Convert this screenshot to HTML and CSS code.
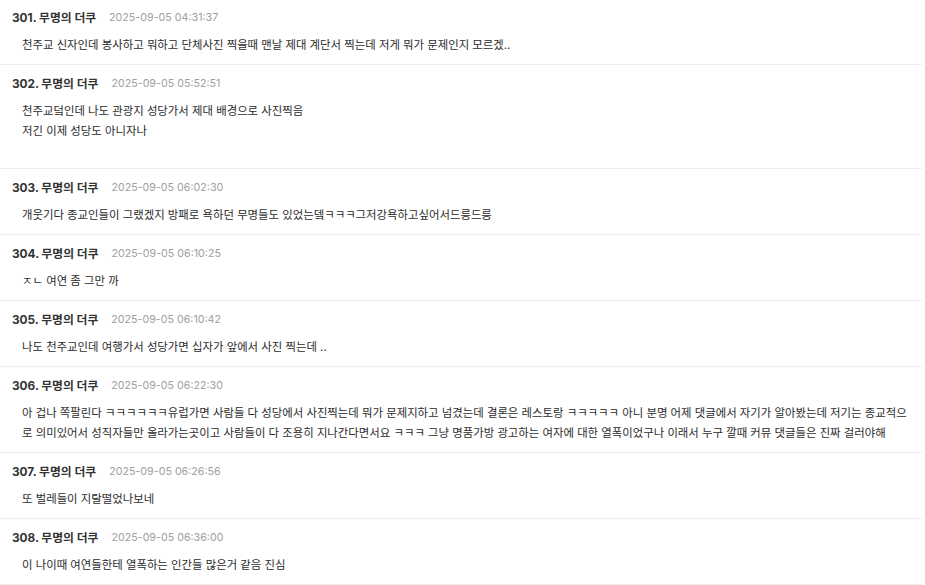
FILE: index.html
```html
<!DOCTYPE html>
<html lang="ko">
<head>
<meta charset="utf-8">
<title>댓글</title>
<link rel="stylesheet" href="styles.css">
</head>
<body>
<ul class="comments">
  <li class="comment">
    <div class="head"><span class="author">301. 무명의 더쿠</span><span class="date">2025-09-05 04:31:37</span></div>
    <div class="text">천주교 신자인데 봉사하고 뭐하고 단체사진 찍을때 맨날 제대 계단서 찍는데 저게 뭐가 문제인지 모르겠..</div>
  </li>
  <li class="comment">
    <div class="head"><span class="author">302. 무명의 더쿠</span><span class="date">2025-09-05 05:52:51</span></div>
    <div class="text text-gap">천주교덬인데 나도 관광지 성당가서 제대 배경으로 사진찍음<br>저긴 이제 성당도 아니자나</div>
  </li>
  <li class="comment">
    <div class="head"><span class="author">303. 무명의 더쿠</span><span class="date">2025-09-05 06:02:30</span></div>
    <div class="text">개웃기다 종교인들이 그랬겠지 방패로 욕하던 무명들도 있었는뎈ㅋㅋㅋ그저강욕하고싶어서드릉드릉</div>
  </li>
  <li class="comment">
    <div class="head"><span class="author">304. 무명의 더쿠</span><span class="date">2025-09-05 06:10:25</span></div>
    <div class="text">ㅈㄴ 여연 좀 그만 까</div>
  </li>
  <li class="comment">
    <div class="head"><span class="author">305. 무명의 더쿠</span><span class="date">2025-09-05 06:10:42</span></div>
    <div class="text">나도 천주교인데 여행가서 성당가면 십자가 앞에서 사진 찍는데 ..</div>
  </li>
  <li class="comment">
    <div class="head"><span class="author">306. 무명의 더쿠</span><span class="date">2025-09-05 06:22:30</span></div>
    <div class="text">아 겁나 쪽팔린다 ㅋㅋㅋㅋㅋㅋ유럽가면 사람들 다 성당에서 사진찍는데 뭐가 문제지하고 넘겼는데 결론은 레스토랑 ㅋㅋㅋㅋㅋ 아니 분명 어제 댓글에서 자기가 알아봤는데 저기는 종교적으로 의미있어서 성직자들만 올라가는곳이고 사람들이 다 조용히 지나간다면서요 ㅋㅋㅋ 그냥 명품가방 광고하는 여자에 대한 열폭이었구나 이래서 누구 깔때 커뮤 댓글들은 진짜 걸러야해</div>
  </li>
  <li class="comment">
    <div class="head"><span class="author">307. 무명의 더쿠</span><span class="date">2025-09-05 06:26:56</span></div>
    <div class="text">또 벌레들이 지랄떨었나보네</div>
  </li>
  <li class="comment">
    <div class="head"><span class="author">308. 무명의 더쿠</span><span class="date">2025-09-05 06:36:00</span></div>
    <div class="text">이 나이때 여연들한테 열폭하는 인간들 많은거 같음 진심</div>
  </li>
</ul>
</body>
</html>
```
FILE: styles.css
```css
html, body {
  margin: 0;
  padding: 0;
  background: #ffffff;
}
body {
  font-family: "Inter", "Noto Sans CJK KR", "Noto Sans", sans-serif;
  color: #2b2b2b;
}
.comments {
  list-style: none;
  margin: 0;
  padding: 0;
  width: 922px;
}
.comment {
  padding: 10px 12px 9px 12px;
  border-bottom: 1px solid #eeeeee;
}
.comment:first-child {
  padding-top: 9px;
}
.head {
  display: flex;
  align-items: center;
  height: 18px;
  line-height: 18px;
}
.author {
  font-size: 11.8px;
  font-weight: 700;
  color: #333333;
}
.date {
  margin-left: 13px;
  font-size: 10.7px;
  color: #a0a0a0;
}
.text {
  margin-top: 8px;
  padding-left: 10px;
  font-size: 11.4px;
  line-height: 20px;
  color: #2b2b2b;
  word-break: break-all;
}
.text-gap {
  padding-bottom: 18px;
}
```
